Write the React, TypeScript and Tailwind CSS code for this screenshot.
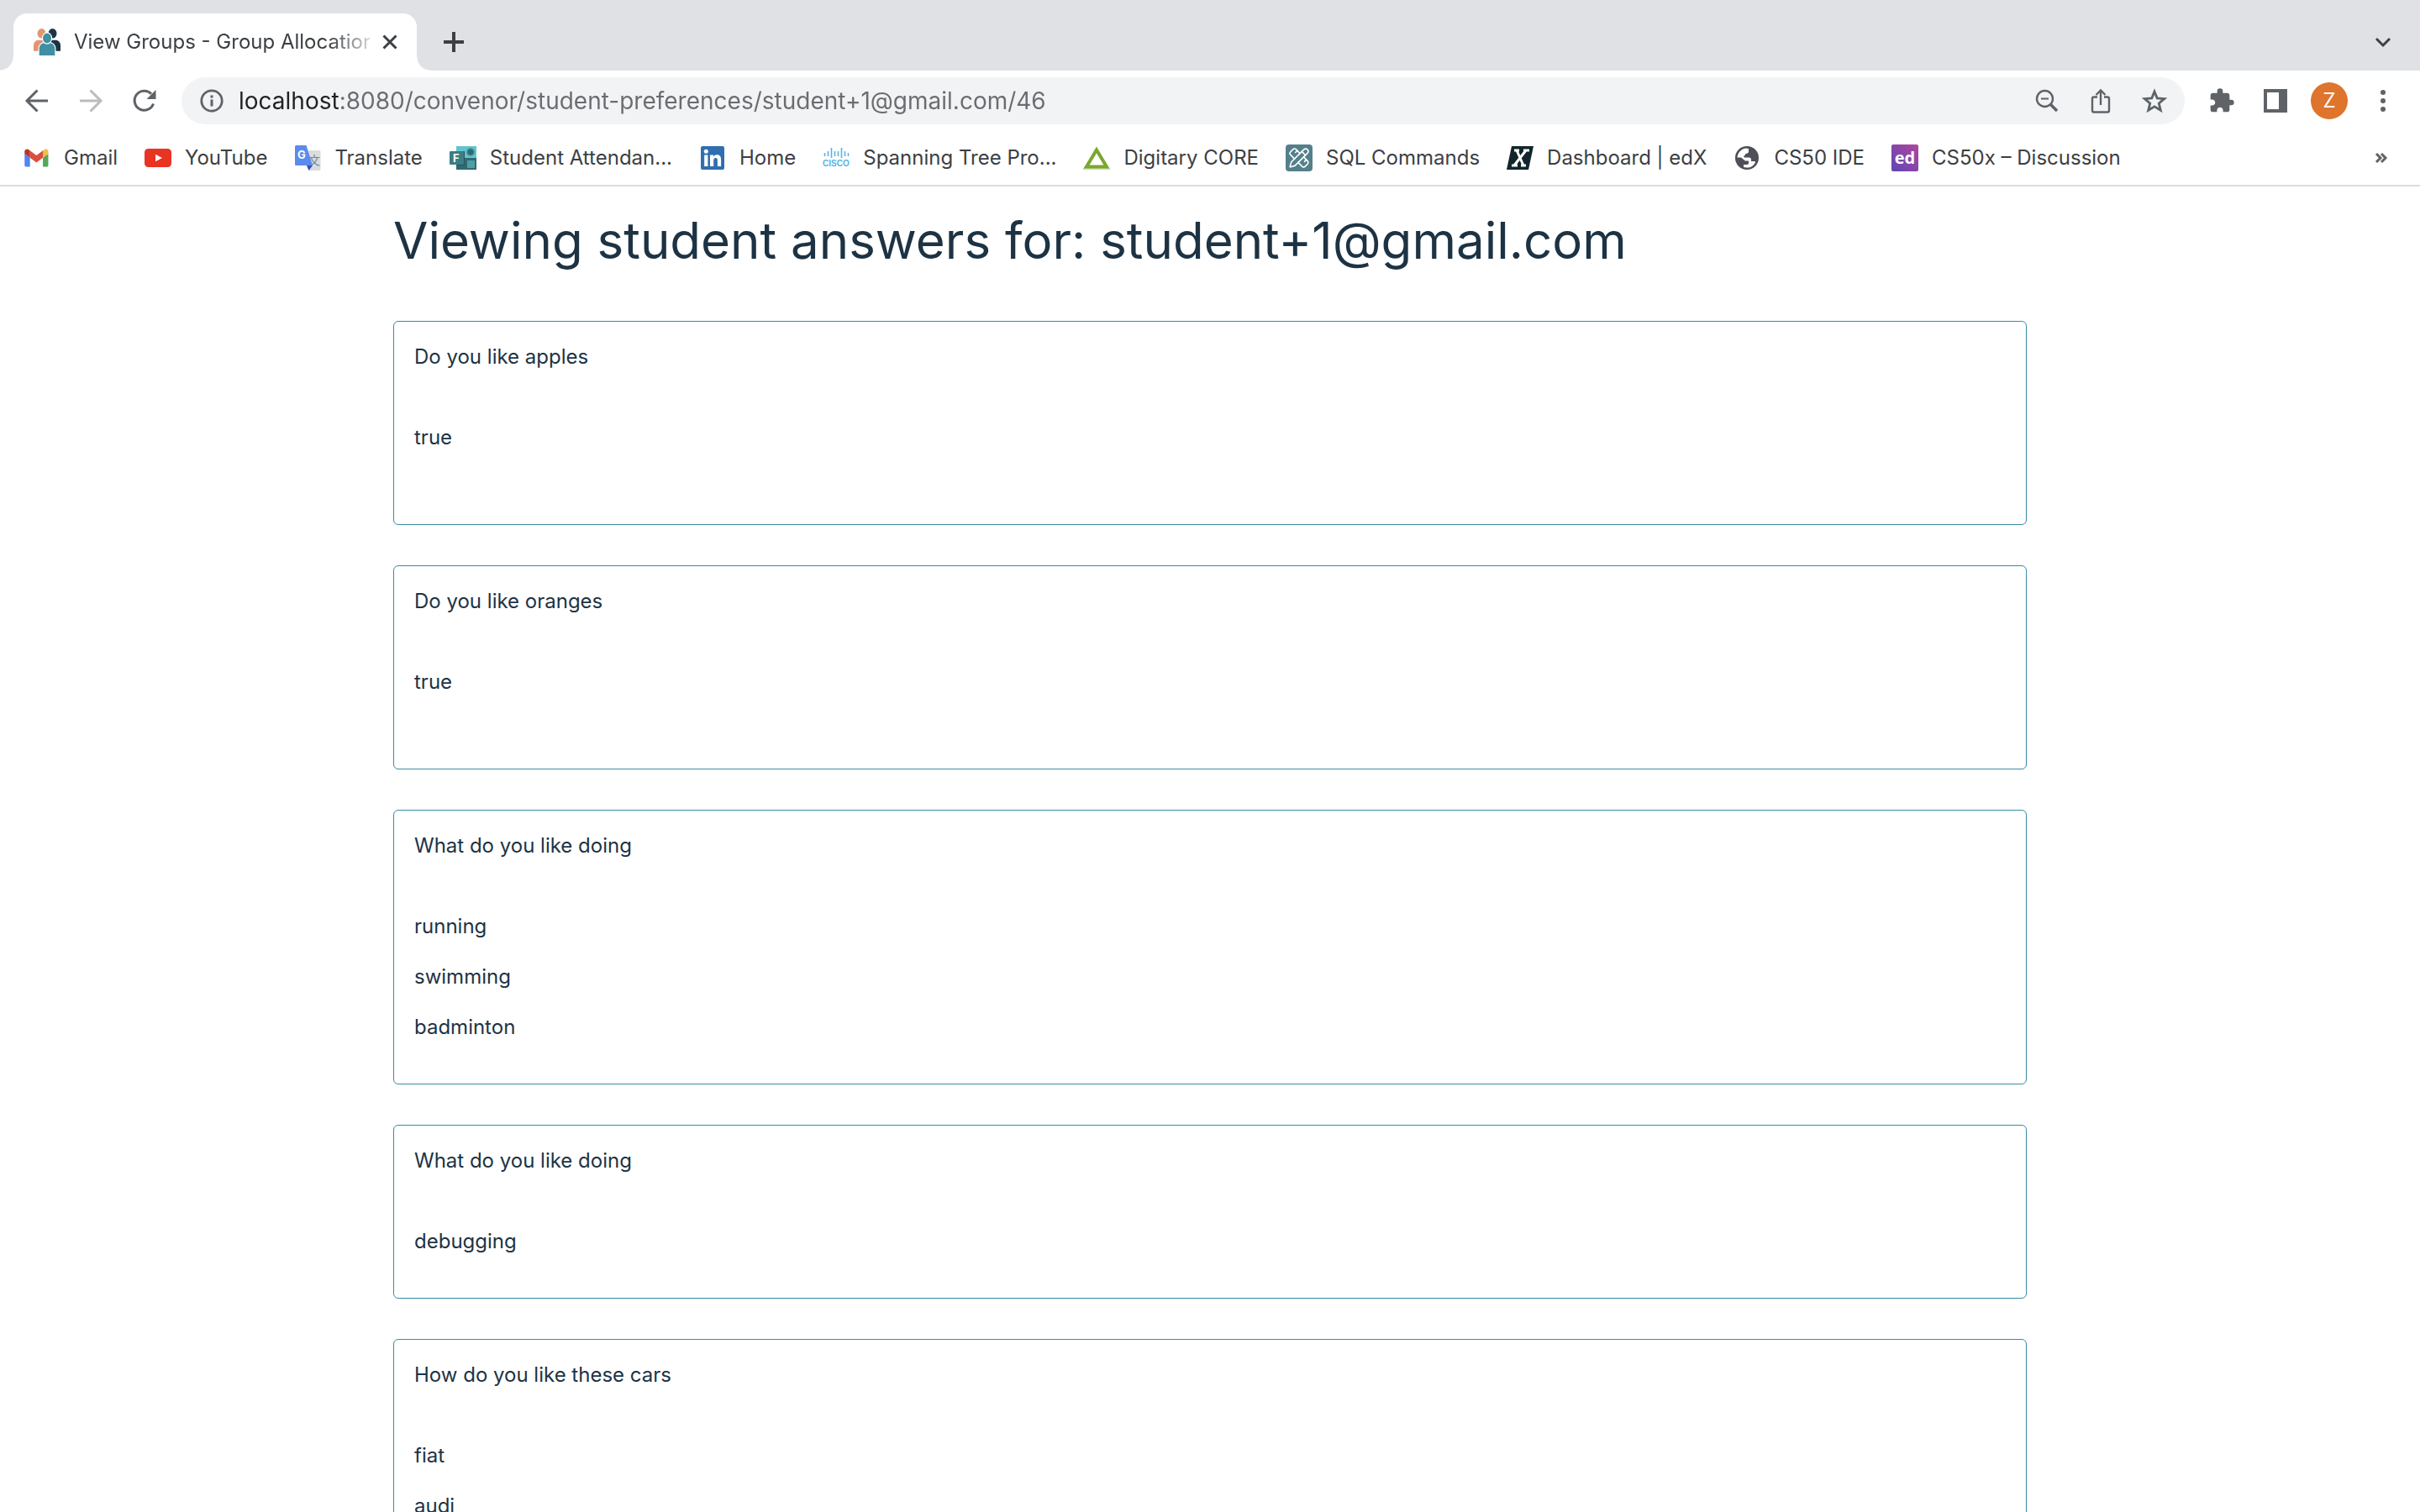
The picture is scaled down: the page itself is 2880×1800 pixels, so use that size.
import type { ReactNode } from 'react';
import { PencilRuler } from 'lucide-react';

const GroupFavicon = () => (
  <svg viewBox="0 0 32 32" className="size-8 shrink-0" aria-hidden="true">
    <g fill="#e39570">
      <ellipse cx="9.5" cy="5.8" rx="5" ry="5.8" />
      <path d="M0 26.7V20c0-3.6 2.6-6.2 6-6.2h7v12.9z" />
    </g>
    <g fill="#1d3344">
      <ellipse cx="22.5" cy="5.8" rx="5" ry="5.8" />
      <path d="M32 26.7V20c0-3.6-2.6-6.2-6-6.2h-7v12.9z" />
    </g>
    <g fill="#418fa3" stroke="#fff" strokeWidth="2.4" paintOrder="stroke">
      <path d="M6.7 32v-8c0-4 2.8-6.7 6.5-6.7h5.6c3.7 0 6.5 2.7 6.5 6.7v8z" />
      <ellipse cx="16" cy="11.5" rx="5" ry="6" />
    </g>
  </svg>
);

const GmailIcon = () => (
  <svg viewBox="48 37 100 76" className="size-8 shrink-0" aria-hidden="true">
    <path fill="#4f86ee" d="M58 108h14V74L52 59v43c0 3.32 2.69 6 6 6" />
    <path fill="#57a65a" d="M120 108h14c3.32 0 6-2.69 6-6V59l-20 15" />
    <path fill="#f2bd42" d="M120 48v26l20-15v-8c0-7.42-8.47-11.65-14.4-7.2" />
    <path fill="#d9503f" d="M72 74V48l24 18 24-18v26L96 92" />
    <path fill="#b8352b" d="M52 51v8l20 15V48l-5.6-4.2c-5.94-4.45-14.4-.22-14.4 7.2" />
  </svg>
);

const YouTubeIcon = () => (
  <svg viewBox="0 0 32 32" className="size-8 shrink-0" aria-hidden="true">
    <rect y="5" width="32" height="22" rx="4.5" fill="#e93323" />
    <path d="M13 11.800l8 4.200-8 4.200z" fill="#fff" />
  </svg>
);

const TranslateIcon = () => (
  <svg viewBox="0 0 32 32" className="size-8 shrink-0" aria-hidden="true">
    <path d="M14 7h16a1.5 1.5 0 0 1 1.5 1.5v21a1.5 1.5 0 0 1-1.5 1.5H17z" fill="#dadcde" />
    <text x="17" y="24" fontSize="14" fill="#6b8794" fontFamily="Noto Sans CJK SC, sans-serif">文</text>
    <path d="M15 25h7l-4.5 6z" fill="#3a4db4" />
    <path d="M2.5 1h12L22 25H2.500A1.500 1.500 0 0 1 1 23.500v-21A1.500 1.500 0 0 1 2.500 1z" fill="#5b8bee" />
    <text x="4" y="17" fontSize="13" fontWeight="700" fill="#fff" fontFamily="Inter, sans-serif">G</text>
  </svg>
);

const FormsIcon = () => (
  <svg viewBox="0 0 32 32" className="size-8 shrink-0" aria-hidden="true">
    <path d="M8 2h24v14H8z" fill="#63c3cd" />
    <path d="M8 16h24v14H8z" fill="#306a70" />
    <circle cx="25" cy="9" r="5" fill="#4a9ba4" />
    <circle cx="25" cy="9" r="3.5" fill="#2c6b75" />
    <path d="M21 19h9v9h-9z" fill="#4c9fa7" />
    <path d="M8 8h10v17H8z" fill="#28585e" />
    <rect y="8" width="17" height="16" rx="1" fill="#3a7f85" />
    <text x="4" y="20.5" fontSize="13" fontWeight="700" fill="#fff" fontFamily="Inter, sans-serif">F</text>
  </svg>
);

const LinkedInIcon = () => (
  <svg viewBox="0 0 32 32" className="size-8 shrink-0" aria-hidden="true">
    <rect x="2" y="2" width="28" height="28" rx="2" fill="#2f6fb0" />
    <g fill="#fff">
      <circle cx="8.300" cy="8.300" r="2.5" />
      <path d="M6.200 12.500h4.200v13.500H6.200zM13 12.500h4v1.900c.8-1.300 2.300-2.200 4.200-2.200 3.900 0 4.900 2.500 4.900 6.100V26h-4.200v-6.800c0-1.800-.3-3.300-2.200-3.300s-2.500 1.400-2.500 3.200V26H13z" />
    </g>
  </svg>
);

const CiscoIcon = () => (
  <svg viewBox="0 0 32 32" className="size-8 shrink-0" aria-hidden="true">
    <path
      d="M2.500 10v4M6.500 8v6M10.500 4v12M14.500 8v6M18.500 8v6M22.500 4v12M26.500 8v6M30.500 10v4"
      stroke="#58b4e3"
      strokeWidth="1.600"
    />
    <text x="0" y="26" fontSize="10" fontWeight="700" fill="#58b4e3" fontFamily="Liberation Sans, sans-serif">CISCO</text>
  </svg>
);

const DigitaryIcon = () => (
  <svg viewBox="0 0 32 32" className="size-8 shrink-0" aria-hidden="true">
    <path d="M0 28h32v2H0z" fill="#cfdfae" />
    <path d="M16 6.500L28 26.500H4z" fill="none" stroke="#7ba62f" strokeWidth="4" />
  </svg>
);

const SqlIcon = () => (
  <span className="flex size-8 shrink-0 items-center justify-center rounded bg-[#54808c] text-white">
    <PencilRuler size={26} strokeWidth={1.5} aria-hidden="true" />
  </span>
);

const EdxIcon = () => (
  <svg viewBox="0 0 32 32" className="size-8 shrink-0" aria-hidden="true">
    <path d="M6 2h26l-6 28H0z" fill="#10262b" />
    <path d="M9 7h6M20 7h7M6 25h7M17 25h6M12 7l8 18M23 7L9 25" stroke="#fff" strokeWidth="3" fill="none" />
  </svg>
);

const GlobeIcon = () => (
  <svg viewBox="0 0 32 32" className="size-8 shrink-0" aria-hidden="true">
    <circle cx="16" cy="16" r="14" fill="#4d5056" />
    <path
      d="M4.500 15.500C5 10 9 5.500 14.500 4.600L18 5v3.500c0 1.500-1 2-2.500 2.200-1.500.2-1.500 1.300-1.500 2.300h-1.500v2.500h6c1.800 0 2.500 1 2.500 2.500v2h3.500c1 0 1.500.6 1.500 1.200C24 25.500 20 27.800 15.500 27.500L12 27v-3h4c1.500 0 2-.8 2-2v-2.500h-4L9 15.500z"
      fill="#fff"
    />
  </svg>
);

const EdIcon = () => (
  <svg viewBox="0 0 32 32" className="size-8 shrink-0" aria-hidden="true">
    <defs>
      <linearGradient id="ed-fill" x1="0" y1="1" x2="1" y2="0">
        <stop offset="0" stopColor="#5f45b5" />
        <stop offset="1" stopColor="#b0479c" />
      </linearGradient>
    </defs>
    <rect width="32" height="32" rx="2" fill="url(#ed-fill)" />
    <text x="16" y="23" textAnchor="middle" fontSize="20" fontWeight="700" fill="#fff" fontFamily="Open Sans, sans-serif">ed</text>
  </svg>
);

const bookmarks: { label: string; icon: ReactNode }[] = [
  { label: 'Gmail', icon: <GmailIcon /> },
  { label: 'YouTube', icon: <YouTubeIcon /> },
  { label: 'Translate', icon: <TranslateIcon /> },
  { label: 'Student Attendan...', icon: <FormsIcon /> },
  { label: 'Home', icon: <LinkedInIcon /> },
  { label: 'Spanning Tree Pro...', icon: <CiscoIcon /> },
  { label: 'Digitary CORE', icon: <DigitaryIcon /> },
  { label: 'SQL Commands', icon: <SqlIcon /> },
  { label: 'Dashboard | edX', icon: <EdxIcon /> },
  { label: 'CS50 IDE', icon: <GlobeIcon /> },
  { label: 'CS50x – Discussion', icon: <EdIcon /> },
];

const questions: { question: string; answers: string[]; isBoolean?: boolean }[] = [
  { question: 'Do you like apples', answers: ['true'], isBoolean: true },
  { question: 'Do you like oranges', answers: ['true'], isBoolean: true },
  { question: 'What do you like doing', answers: ['running', 'swimming', 'badminton'] },
  { question: 'What do you like doing', answers: ['debugging'] },
  { question: 'How do you like these cars', answers: ['fiat', 'audi'] },
];

function IconButton({ label, children }: { label: string; children: ReactNode }) {
  return (
    <button type="button" aria-label={label} className="flex size-14 shrink-0 items-center justify-center rounded-full">
      {children}
    </button>
  );
}

function Line({ d, width = 3, className = 'text-[#5f6368]' }: { d: string; width?: number; className?: string }) {
  return (
    <svg viewBox="0 0 32 32" className={`size-8 ${className}`} fill="none" stroke="currentColor" strokeWidth={width} aria-hidden="true">
      <path d={d} />
    </svg>
  );
}

function TabStrip() {
  return (
    <div className="flex h-[84px] shrink-0 items-end bg-[#dfe1e5] px-4">
      <div className="relative flex h-[68px] w-[480px] items-center rounded-t-2xl bg-white pr-4 pl-6">
        <span className="absolute bottom-0 -left-4 size-4 bg-[radial-gradient(circle_at_0_0,#dfe1e5_15px,white_16px)]" />
        <span className="absolute -right-4 bottom-0 size-4 bg-[radial-gradient(circle_at_100%_0,#dfe1e5_15px,white_16px)]" />
        <GroupFavicon />
        <span className="ml-4 min-w-0 flex-1 overflow-hidden text-2xl whitespace-nowrap text-[#3c4043] [mask-image:linear-gradient(to_right,black_86%,transparent_104%)]">
          View Groups - Group Allocation
        </span>
        <button type="button" aria-label="Close tab" className="ml-2 flex size-8 items-center justify-center">
          <Line d="M8.500 8.500l15 15M23.500 8.500l-15 15" className="text-[#3c4043]" />
        </button>
      </div>
      <div className="ml-4 flex h-[68px] flex-1 items-center justify-between">
        <IconButton label="New tab">
          <Line d="M16 4v24M4 16h24" width={4} className="text-[#3c4043]" />
        </IconButton>
        <IconButton label="Search tabs">
          <Line d="M8 12l8 8 8-8" className="text-[#3c4043]" />
        </IconButton>
      </div>
    </div>
  );
}

function Toolbar() {
  return (
    <div className="flex shrink-0 items-center gap-2 px-4 py-2">
      <IconButton label="Back">
        <Line d="M29 16H4M16.500 3.500L4 16l12.500 12.500" />
      </IconButton>
      <IconButton label="Forward">
        <Line d="M3 16h25M15.500 3.500L28 16 15.500 28.500" className="text-[#babcbe]" />
      </IconButton>
      <IconButton label="Reload">
        <svg viewBox="0 0 32 32" className="size-8 text-[#5f6368]" fill="none" stroke="currentColor" strokeWidth="3" aria-hidden="true">
          <path d="M26.500 19.500A11.500 11.500 0 1 1 24 7.800" />
          <path d="M29.500 3v11h-11z" fill="currentColor" stroke="none" />
        </svg>
      </IconButton>
      <div className="ml-2 flex h-14 flex-1 items-center gap-2 rounded-full bg-[#f1f3f4] px-2">
        <IconButton label="View site information">
          <svg viewBox="0 0 32 32" className="size-8 text-[#5f6368]" aria-hidden="true">
            <circle cx="16" cy="16" r="12.200" fill="none" stroke="currentColor" strokeWidth="2.800" />
            <path d="M14.500 9.500h3v3h-3zM14.500 14.500h3v8h-3z" fill="currentColor" />
          </svg>
        </IconButton>
        <input
          type="text"
          aria-label="Address and search bar"
          defaultValue="localhost:8080/convenor/student-preferences/student+1@gmail.com/46"
          className="-ml-1 min-w-0 flex-1 bg-[linear-gradient(to_right,#202124_119px,#696c70_119px)] bg-clip-text text-[28px] text-transparent caret-black outline-none"
        />
        <IconButton label="Zoom">
          <svg viewBox="0 0 32 32" className="size-8 text-[#5f6368]" fill="none" stroke="currentColor" aria-hidden="true">
            <circle cx="13.500" cy="13.500" r="9.500" strokeWidth="2.400" />
            <path d="M9 13.500h9" strokeWidth="2" />
            <path d="M20.500 20.500l7.500 7.500" strokeWidth="3.600" />
          </svg>
        </IconButton>
        <IconButton label="Share">
          <Line d="M12 11.500H8a2 2 0 0 0-2 2v14a2 2 0 0 0 2 2h16a2 2 0 0 0 2-2v-14a2 2 0 0 0-2-2h-4M16 21V4.500M10.500 9L16 3.500 21.500 9" width={2.4} />
        </IconButton>
        <IconButton label="Bookmark this tab">
          <Line d="M16 5l3.200 7.800 8.600.7-6.500 5.500 2 8.300-7.300-4.500-7.300 4.500 2-8.300-6.500-5.500 8.600-.7z" width={2.8} />
        </IconButton>
      </div>
      <div className="ml-2 flex items-center gap-2">
        <IconButton label="Extensions">
          <svg viewBox="0 0 24 24" className="size-8 text-[#5f6368]" fill="currentColor" aria-hidden="true">
            <path d="M20.500 11H19V7c0-1.100-.9-2-2-2h-4V3.500a2.500 2.500 0 0 0-5 0V5H4c-1.100 0-1.990.9-1.990 2v3.800H3.500c1.490 0 2.700 1.210 2.700 2.700s-1.210 2.700-2.700 2.700H2V20c0 1.100.9 2 2 2h3.800v-1.500c0-1.490 1.210-2.700 2.700-2.700s2.700 1.210 2.700 2.700V22H17c1.100 0 2-.9 2-2v-4h1.500a2.500 2.500 0 0 0 0-5z" />
          </svg>
        </IconButton>
        <IconButton label="Side panel">
          <svg viewBox="0 0 32 32" className="size-8 text-[#5f6368]" aria-hidden="true">
            <path d="M2 2h28v28H2zM6 6v20h14V6z" fill="currentColor" fillRule="evenodd" />
          </svg>
        </IconButton>
        <IconButton label="Profile">
          <span className="flex size-11 items-center justify-center rounded-full bg-[#df742c] text-2xl text-white">Z</span>
        </IconButton>
        <IconButton label="Menu">
          <svg viewBox="0 0 32 32" className="size-8 text-[#5f6368]" fill="currentColor" aria-hidden="true">
            <circle cx="16" cy="6" r="3" />
            <circle cx="16" cy="16" r="3" />
            <circle cx="16" cy="26" r="3" />
          </svg>
        </IconButton>
      </div>
    </div>
  );
}

function BookmarksBar() {
  return (
    <nav aria-label="Bookmarks" className="flex h-[66px] shrink-0 items-center gap-8 border-b-2 border-[#dcdcdc] pr-4 pl-7">
      {bookmarks.map(({ label, icon }) => (
        <a key={label} href="#" className="flex items-center gap-4 text-2xl whitespace-nowrap text-[#3c4043]">
          {icon}
          {label}
        </a>
      ))}
      <div className="ml-auto">
        <IconButton label="More bookmarks">
          <Line d="M8 11l5 5-5 5M14 11l5 5-5 5" />
        </IconButton>
      </div>
    </nav>
  );
}

function AnswerCard({ question, answers, isBoolean }: { question: string; answers: string[]; isBoolean?: boolean }) {
  return (
    <section className="rounded-md border border-[#378da2] px-6 pt-6 pb-[25px]">
      <h2 className="mb-[60px]">{question}</h2>
      {answers.map((answer) => (
        <p key={answer} className="mb-6">
          {answer}
        </p>
      ))}
      {isBoolean && <div className="h-9" />}
    </section>
  );
}

export default function App() {
  return (
    <div className="flex h-screen flex-col overflow-hidden bg-white font-['Inter',sans-serif]">
      <TabStrip />
      <Toolbar />
      <BookmarksBar />
      <main className="min-h-0 flex-1 overflow-hidden text-[#1d3344]">
        <div className="mx-auto w-[67.5%] pt-7">
          <h1 className="text-[60px] leading-[72px]">Viewing student answers for: student+1@gmail.com</h1>
          <div className="mt-[60px] flex flex-col gap-12 text-2xl leading-9">
            {questions.map((item, index) => (
              <AnswerCard key={index} {...item} />
            ))}
          </div>
        </div>
      </main>
    </div>
  );
}
